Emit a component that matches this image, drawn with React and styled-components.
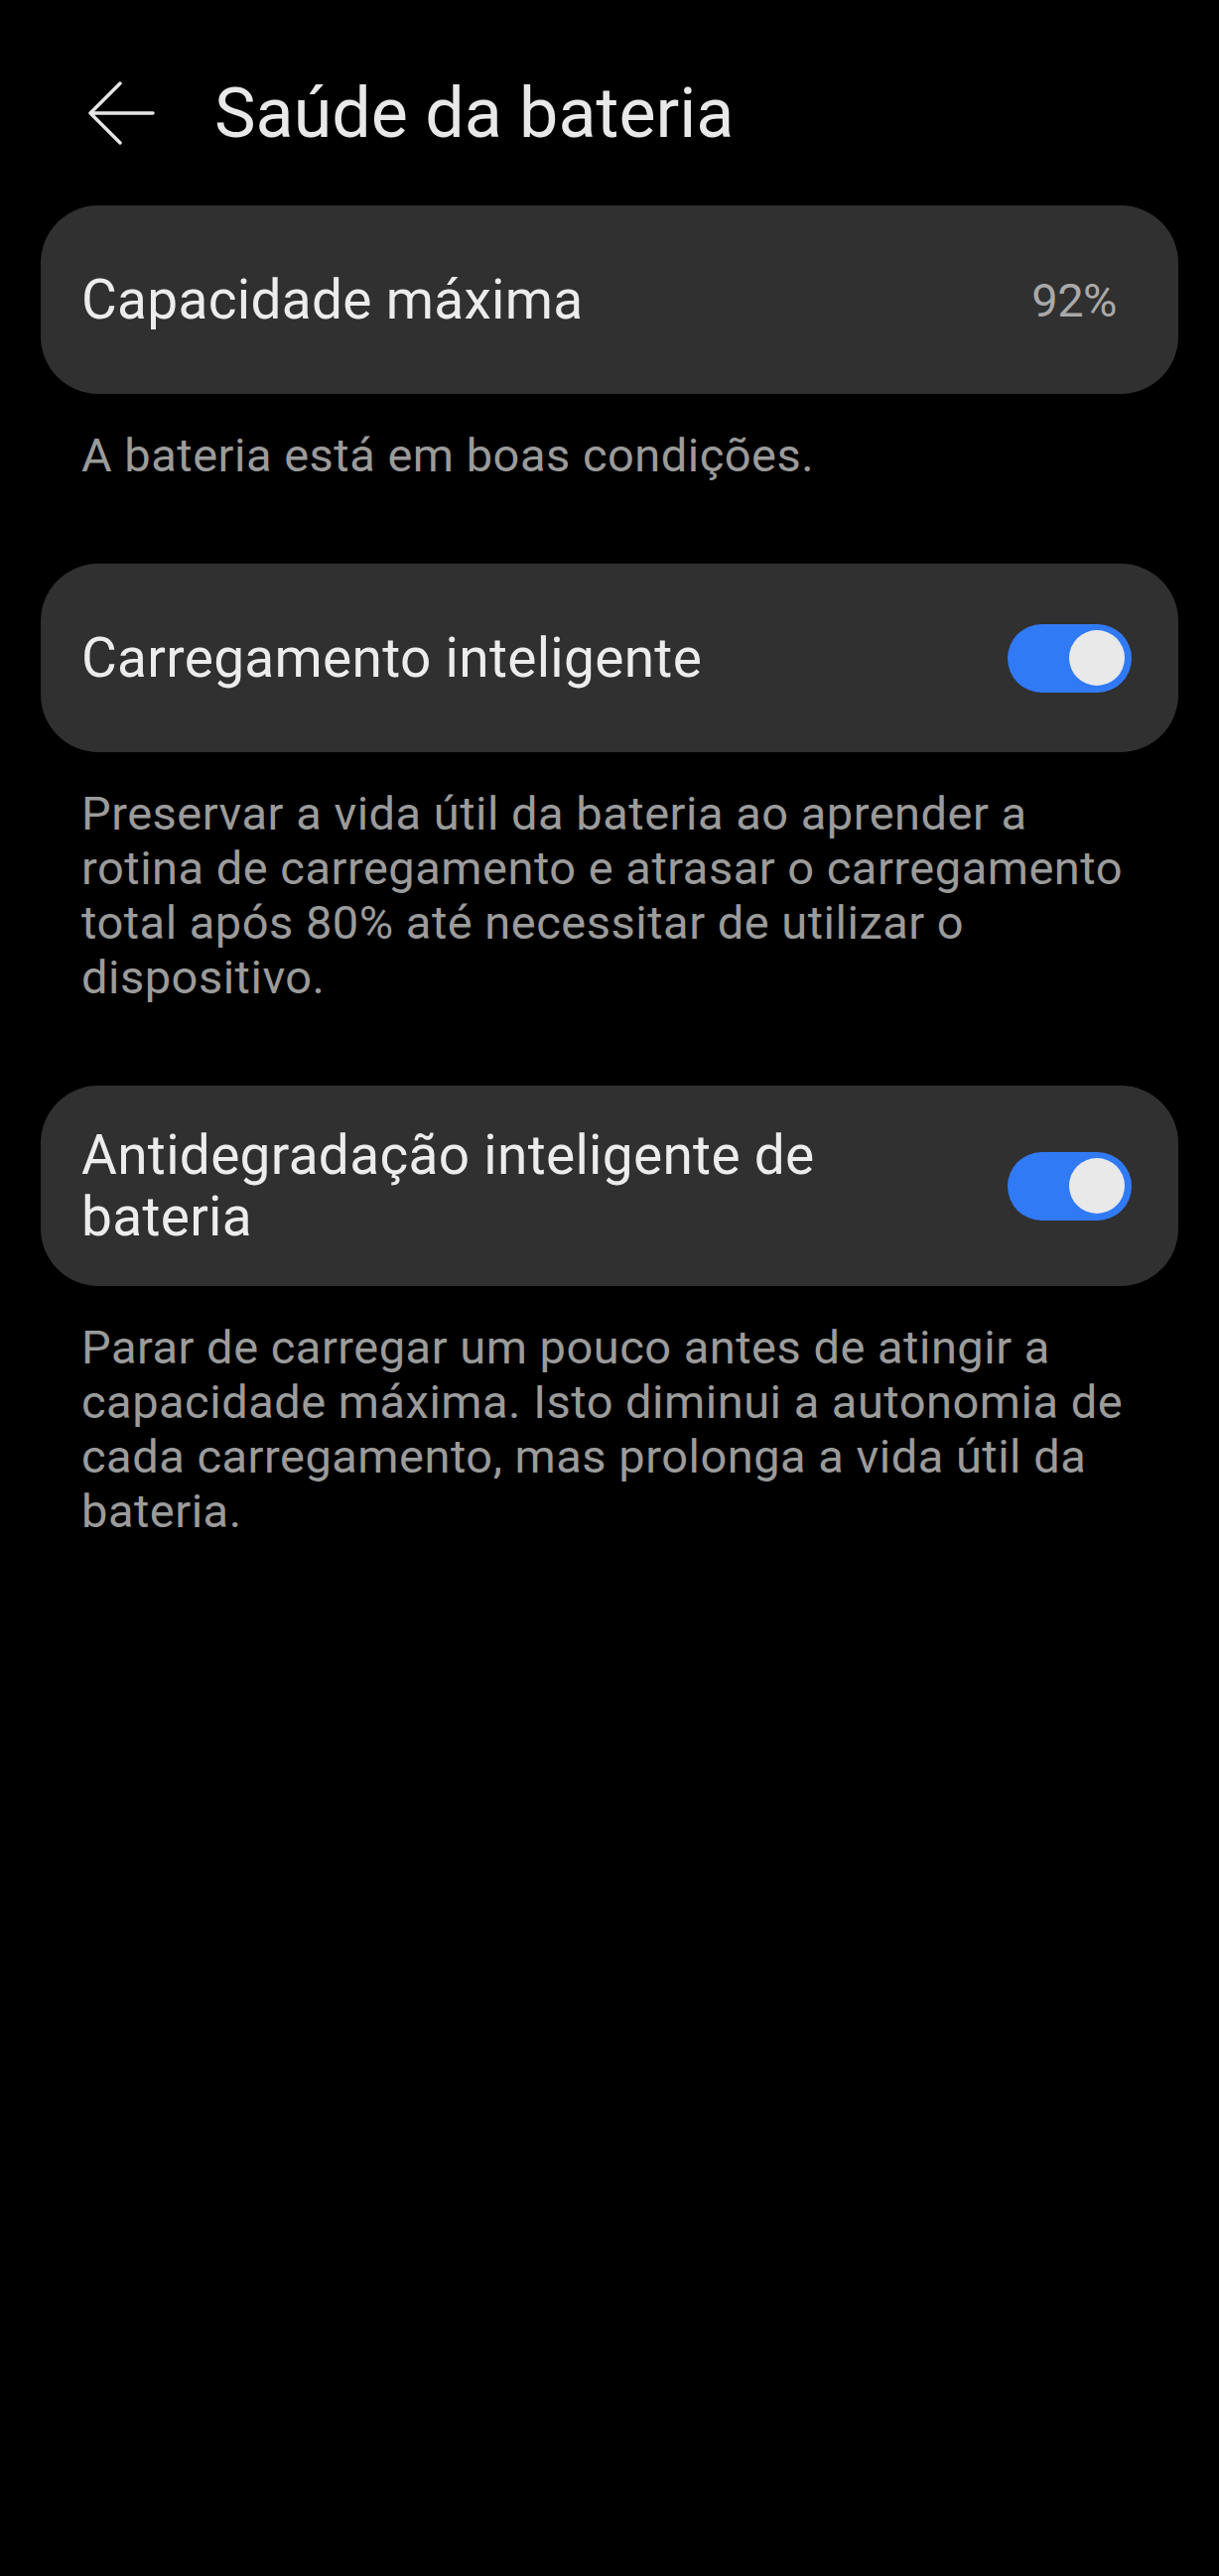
import styled, { createGlobalStyle } from "styled-components";

const GlobalStyle = createGlobalStyle`
  html, body {
    margin: 0;
    padding: 0;
    background: #000;
  }
  body {
    font-family: Roboto, "Noto Sans", "Liberation Sans", sans-serif;
  }
`;

const Page = styled.div`
  min-height: 100vh;
  background: #000;
  padding: 0 41px;
  box-sizing: border-box;
`;

const Header = styled.div`
  display: flex;
  align-items: center;
  height: 207px;
  padding: 20px 0 0 47px;
  box-sizing: border-box;
  gap: 60px;
`;

const BackButton = styled.button`
  display: flex;
  align-items: center;
  justify-content: center;
  background: none;
  border: none;
  padding: 0;
  cursor: pointer;
`;

const Title = styled.h1`
  margin: 0;
  font-size: 70px;
  font-weight: 400;
  color: #e8e8e8;
`;

const Card = styled.div`
  display: flex;
  align-items: center;
  justify-content: space-between;
  gap: 40px;
  min-height: 190px;
  padding: 39px 47px 39px 41px;
  box-sizing: border-box;
  background: #303030;
  border-radius: 58px;
`;

const Label = styled.div`
  font-size: 55px;
  line-height: 62px;
  color: #ececec;
  letter-spacing: 0.3px;
  max-width: 850px;
`;

const Value = styled.div`
  font-size: 47px;
  color: #a9a9a9;
  margin-right: 15px;
  letter-spacing: -0.5px;
`;

const Description = styled.p`
  margin: 34px 0 ${(p) => (p.last ? "0" : "82px")};
  padding: 0 36px 0 41px;
  font-size: 47px;
  line-height: 55px;
  color: #9b9b9b;
  letter-spacing: 0.5px;
`;

const Track = styled.div`
  flex-shrink: 0;
  position: relative;
  width: 125px;
  height: 69px;
  border-radius: 35px;
  background: ${(p) => (p.on ? "#317af5" : "#5a5a5a")};
`;

const Knob = styled.div`
  position: absolute;
  top: 6.5px;
  ${(p) => (p.on ? "right: 7px;" : "left: 7px;")}
  width: 56px;
  height: 56px;
  border-radius: 50%;
  background: #e9e9e9;
`;

const Toggle = ({ on }) => (
  <Track on={on}>
    <Knob on={on} />
  </Track>
);

const BackArrow = () => (
  <svg width="68" height="64" viewBox="0 0 68 64" fill="none">
    <path
      d="M33 2 L3 32 L33 62 M3 32 H66"
      stroke="#e6e6e6"
      strokeWidth="3.5"
      strokeLinecap="round"
      strokeLinejoin="round"
    />
  </svg>
);

export default function App() {
  return (
    <>
      <GlobalStyle />
      <Page>
        <Header>
          <BackButton aria-label="Voltar">
            <BackArrow />
          </BackButton>
          <Title>Saúde da bateria</Title>
        </Header>

        <Card>
          <Label>Capacidade máxima</Label>
          <Value>92%</Value>
        </Card>
        <Description>A bateria está em boas condições.</Description>

        <Card>
          <Label>Carregamento inteligente</Label>
          <Toggle on />
        </Card>
        <Description>
          Preservar a vida útil da bateria ao aprender a rotina de carregamento
          e atrasar o carregamento total após 80% até necessitar de utilizar o
          dispositivo.
        </Description>

        <Card>
          <Label>Antidegradação inteligente de bateria</Label>
          <Toggle on />
        </Card>
        <Description last>
          Parar de carregar um pouco antes de atingir a capacidade máxima. Isto
          diminui a autonomia de cada carregamento, mas prolonga a vida útil da
          bateria.
        </Description>
      </Page>
    </>
  );
}
